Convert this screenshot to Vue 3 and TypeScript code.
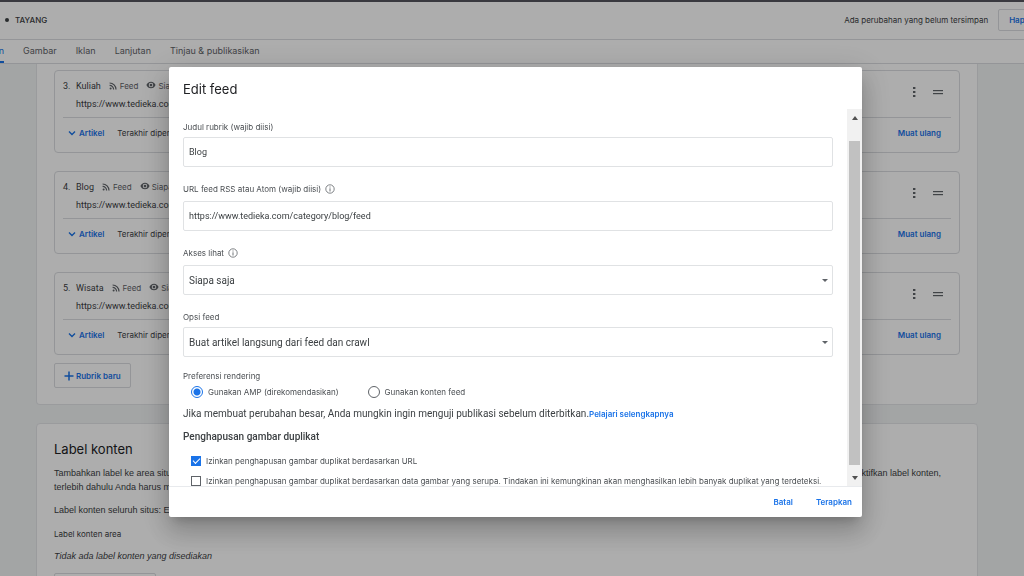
<script setup lang="ts">
import { ref } from 'vue'

interface Section {
  no: number
  title: string
  url: string
}

const tabs: string[] = ['Gambar', 'Iklan', 'Lanjutan', 'Tinjau & publikasikan']

const sections: Section[] = [
  { no: 3, title: 'Kuliah', url: 'https://www.tedieka.com/category/kuliah/feed' },
  { no: 4, title: 'Blog', url: 'https://www.tedieka.com/category/blog/feed' },
  { no: 5, title: 'Wisata', url: 'https://www.tedieka.com/category/wisata/feed' },
]

const title = ref('Blog')
const feedUrl = ref('https://www.tedieka.com/category/blog/feed')
const access = ref('Siapa saja')
const option = ref('Buat artikel langsung dari feed dan crawl')
const rendering = ref('amp')
const dedupeUrl = ref(true)
const dedupeData = ref(false)
</script>

<template>
  <div class="page">
    <header class="topbar">
      <span class="status"><i class="dot"></i>TAYANG</span>
      <span class="unsaved">Ada perubahan yang belum tersimpan</span>
      <button class="outlined discard" type="button">Hapus</button>
    </header>
    <nav class="tabs">
      <a class="tab current" href="#konten">Konten</a>
      <a v-for="t in tabs" :key="t" class="tab" href="#tab">{{ t }}</a>
    </nav>

    <main class="content">
      <section class="panel feeds">
        <article v-for="s in sections" :key="s.no" class="card">
          <div class="card-head">
            <span class="no">{{ s.no }}.</span>
            <div class="info">
              <div class="name-row">
                <span class="name">{{ s.title }}</span>
                <svg class="feed-icon" viewBox="0 0 8 8" width="8" height="8">
                  <circle cx="1.6" cy="6.4" r="1" fill="#5f6368" />
                  <path d="M.6 3.4A4 4 0 0 1 4.6 7.4M.6 1A6.4 6.4 0 0 1 7 7.4" fill="none" stroke="#5f6368" stroke-width="1.2" />
                </svg>
                <span class="meta">Feed</span>
                <svg class="eye-icon" viewBox="0 0 24 24" width="10" height="10">
                  <path fill="#5f6368" d="M12 4C7 4 2.700 7.400 1 12c1.700 4.600 6 8 11 8s9.300-3.400 11-8c-1.700-4.600-6-8-11-8zM12 17.500a5.500 5.500 0 1 1 0-11 5.500 5.500 0 0 1 0 11zm0-8.800a3.300 3.300 0 1 0 0 6.600 3.300 3.300 0 0 0 0-6.600z" />
                </svg>
                <span class="meta">Siapa saja</span>
              </div>
              <div class="url">{{ s.url }}</div>
            </div>
            <div class="tools">
              <button class="icon-btn" type="button" aria-label="Opsi lainnya">
                <svg viewBox="0 0 12 12" width="12" height="12" fill="#5f6368">
                  <rect x="5" y="1" width="2.400" height="2" />
                  <rect x="5" y="5" width="2.400" height="2" />
                  <rect x="5" y="9" width="2.400" height="2" />
                </svg>
              </button>
              <button class="icon-btn" type="button" aria-label="Pindahkan">
                <svg viewBox="0 0 12 12" width="12" height="12" fill="#5f6368">
                  <rect x="1" y="4" width="10" height="1.200" />
                  <rect x="1" y="7" width="10" height="1.200" />
                </svg>
              </button>
            </div>
          </div>
          <div class="card-foot">
            <button class="link-btn" type="button">
              <svg viewBox="0 0 8 8" width="8" height="8"><path d="M1 2.500 4 5.500 7 2.500" fill="none" stroke="#1a73e8" stroke-width="1.400" /></svg>
              Artikel
            </button>
            <span class="updated">Terakhir diperbarui</span>
            <button class="link-btn reload" type="button">Muat ulang</button>
          </div>
        </article>
        <button class="outlined add" type="button">
          <svg viewBox="0 0 10 10" width="10" height="10"><path d="M5 .5v9M.5 5h9" stroke="#1a73e8" stroke-width="1.500" /></svg>
          Rubrik baru
        </button>
      </section>

      <section class="panel labels">
        <h2>Label konten</h2>
        <p class="spread"><span>Tambahkan label ke area situs</span><span>mengaktifkan label konten,</span></p>
        <p>terlebih dahulu Anda harus memilih</p>
        <p class="site-label">Label konten seluruh situs: Edit</p>
        <p class="small">Label konten area</p>
        <p class="none">Tidak ada label konten yang disediakan</p>
        <button class="outlined add-label" type="button" aria-label="Tambahkan label"></button>
      </section>
    </main>

    <div class="scrim">
      <form class="dialog" role="dialog" aria-labelledby="dialog-title" @submit.prevent>
        <h1 id="dialog-title">Edit feed</h1>
        <div class="dialog-body">
          <div class="fields">
            <div class="field">
              <label for="f-title">Judul rubrik (wajib diisi)</label>
              <input id="f-title" v-model="title" class="box" type="text" />
            </div>
            <div class="field with-info">
              <label for="f-url">URL feed RSS atau Atom (wajib diisi)
                <svg viewBox="0 0 10 10" width="10" height="10"><circle cx="5" cy="5" r="4.200" fill="none" stroke="#5f6368" stroke-width=".8" /><path d="M5 4.300v3.200M5 2.500v1" stroke="#5f6368" stroke-width=".9" /></svg>
              </label>
              <input id="f-url" v-model="feedUrl" class="box" type="text" />
            </div>
            <div class="field with-info">
              <label for="f-access">Akses lihat
                <svg viewBox="0 0 10 10" width="10" height="10"><circle cx="5" cy="5" r="4.200" fill="none" stroke="#5f6368" stroke-width=".8" /><path d="M5 4.300v3.200M5 2.500v1" stroke="#5f6368" stroke-width=".9" /></svg>
              </label>
              <div class="select-wrap">
                <select id="f-access" v-model="access" class="box"><option>Siapa saja</option></select>
                <i class="caret"></i>
              </div>
            </div>
            <div class="field">
              <label for="f-option">Opsi feed</label>
              <div class="select-wrap">
                <select id="f-option" v-model="option" class="box"><option>Buat artikel langsung dari feed dan crawl</option></select>
                <i class="caret"></i>
              </div>
            </div>
            <fieldset class="render">
              <legend>Preferensi rendering</legend>
              <div class="choices">
                <label><input v-model="rendering" type="radio" name="render" value="amp" />Gunakan AMP (direkomendasikan)</label>
                <label><input v-model="rendering" type="radio" name="render" value="feed" />Gunakan konten feed</label>
              </div>
            </fieldset>
            <p class="hint">Jika membuat perubahan besar, Anda mungkin ingin menguji publikasi sebelum diterbitkan.<a href="#bantuan">Pelajari selengkapnya</a></p>
            <h2 class="sub">Penghapusan gambar duplikat</h2>
            <label class="check"><input v-model="dedupeUrl" type="checkbox" />Izinkan penghapusan gambar duplikat berdasarkan URL</label>
            <label class="check"><input v-model="dedupeData" type="checkbox" />Izinkan penghapusan gambar duplikat berdasarkan data gambar yang serupa. Tindakan ini kemungkinan akan menghasilkan lebih banyak duplikat yang terdeteksi.</label>
          </div>
          <div class="scrollbar">
            <i class="arrow up"></i>
            <div class="track"><div class="thumb"></div></div>
            <i class="arrow down"></i>
          </div>
        </div>
        <footer class="actions">
          <button class="link-btn" type="button">Batal</button>
          <button class="link-btn" type="submit">Terapkan</button>
        </footer>
      </form>
    </div>
  </div>
</template>

<style>
body {
  background: #f1f3f4;
}
</style>

<style scoped>
* {
  box-sizing: border-box;
}
.page {
  height: 100vh;
  overflow: hidden;
  background: #f1f3f4;
  color: #3c4043;
  font-family: Roboto, "Liberation Sans", sans-serif;
  font-size: 10px;
  line-height: 14px;
}
h1, h2, p, fieldset {
  margin: 0;
  padding: 0;
  border: 0;
}
button, input, select {
  font-family: inherit;
  color: inherit;
  margin: 0;
}
a {
  text-decoration: none;
}
svg {
  display: block;
  flex: none;
}
.topbar {
  display: flex;
  align-items: center;
  height: 40px;
  padding: 0 0 2px 5px;
  background: #fff;
  border-top: 2px solid #55555d;
  border-bottom: 1px solid #dadce0;
  overflow: hidden;
}
.status {
  display: flex;
  align-items: center;
  gap: 6px;
  font-family: Inter, sans-serif;
  font-size: 8px;
  font-weight: 500;
}
.dot {
  width: 4px;
  height: 4px;
  border-radius: 50%;
  background: #3c4043;
}
.unsaved {
  margin-left: auto;
  margin-right: 10px;
  font-family: Inter, sans-serif;
  font-size: 8px;
}
.outlined {
  display: flex;
  align-items: center;
  background: #fff;
  border: 1px solid #dadce0;
  border-radius: 2px;
  color: #1a73e8;
  font-family: Inter, sans-serif;
  font-size: 8px;
  font-weight: 600;
  line-height: 12px;
}
.discard {
  height: 22px;
  padding: 0 10px;
  margin-right: -21px;
}
.tabs {
  display: flex;
  gap: 19px;
  height: 24px;
  background: #fff;
  border-bottom: 1px solid #dadce0;
  margin-left: -31px;
}
.tab {
  height: 23px;
  line-height: 22px;
  font-family: Inter, sans-serif;
  font-size: 9px;
  color: #5f6368;
}
.tab.current {
  width: 35px;
  display: flex;
  justify-content: flex-end;
  color: #1a73e8;
  border-bottom: 2px solid #1a73e8;
}
.content {
  padding: 0 46px 0 36px;
}
.panel {
  background: #fff;
  border: 1px solid #e3e5e8;
  border-radius: 4px;
  padding: 0 17px;
}
.feeds {
  border-top: 0;
  border-radius: 0 0 4px 4px;
  padding-top: 6px;
  padding-bottom: 16px;
}
.card {
  border: 1px solid #dadce0;
  border-radius: 4px;
  padding: 6px 8px 5px;
  margin-bottom: 18px;
}
.card-head {
  display: flex;
  height: 41px;
  border-bottom: 1px solid #dadce0;
}
.no {
  width: 13px;
  font-size: 9px;
  line-height: 18px;
}
.info {
  flex: 1;
}
.name-row {
  display: flex;
  align-items: center;
  height: 18px;
}
.name {
  font-size: 9px;
}
.feed-icon {
  margin: 0 3px 0 8px;
}
.eye-icon {
  margin: 0 2px 2px 8px;
}
.meta {
  font-family: Inter, sans-serif;
  font-size: 8px;
  color: #5f6368;
}
.url {
  font-size: 9px;
  line-height: 18px;
}
.tools {
  display: flex;
  gap: 12px;
  height: 30px;
  align-items: center;
  padding-right: 7px;
}
.icon-btn {
  border: 0;
  padding: 0;
  background: none;
}
.card-foot {
  display: flex;
  align-items: center;
  height: 29px;
  padding: 0 10px 0 5px;
}
.link-btn {
  display: flex;
  align-items: center;
  gap: 3px;
  border: 0;
  padding: 0;
  background: none;
  color: #1a73e8;
  font-family: Inter, sans-serif;
  font-size: 8px;
  font-weight: 600;
  line-height: 12px;
}
.updated {
  margin-left: 13px;
  font-family: Inter, sans-serif;
  font-size: 8px;
}
.reload {
  margin-left: auto;
}
.add {
  height: 25px;
  gap: 2px;
  padding: 0 9px;
  margin-top: -10px;
}
.labels {
  margin-top: 18px;
  padding-top: 16px;
  height: 200px;
}
.labels h2 {
  font-family: Inter, sans-serif;
  font-size: 13px;
  font-weight: 400;
  line-height: 18px;
  color: #202124;
  margin-bottom: 8px;
}
.labels p {
  font-family: "Liberation Sans", sans-serif;
  font-size: 9px;
}
.spread {
  display: flex;
  justify-content: space-between;
  padding-right: 19px;
}
.site-label {
  margin-top: 9px;
}
.labels .small {
  margin-top: 10px;
  font-family: Inter, sans-serif;
  font-size: 8px;
}
.none {
  margin-top: 8px;
  font-style: italic;
}
.add-label {
  margin-top: 10px;
  height: 25px;
  width: 102px;
}
.scrim {
  position: fixed;
  inset: 0;
  display: flex;
  padding: 67px 162px 59px 169px;
  background: rgba(0, 0, 0, 0.32);
}
.dialog {
  flex: 1;
  min-width: 0;
  display: flex;
  flex-direction: column;
  background: #fff;
  border-radius: 2px;
  overflow: hidden;
  box-shadow: 0 7px 10px -5px rgba(0, 0, 0, 0.2), 0 16px 25px 2px rgba(0, 0, 0, 0.14), 0 6px 31px 5px rgba(0, 0, 0, 0.12);
}
.dialog h1 {
  height: 42px;
  padding: 12px 14px;
  font-family: Inter, sans-serif;
  font-size: 13px;
  font-weight: 400;
  line-height: 20px;
  color: #202124;
}
.dialog-body {
  flex: 1;
  min-height: 0;
  display: flex;
}
.fields {
  flex: 1;
  min-width: 0;
  overflow: hidden;
  padding: 12px 14px 0;
}
.field {
  display: flex;
  flex-direction: column;
  gap: 4px;
  margin-bottom: 16px;
}
.field label, .render legend {
  display: flex;
  align-items: center;
  gap: 4px;
  height: 12px;
  padding: 0;
  font-family: Inter, sans-serif;
  font-size: 8px;
  line-height: 12px;
  color: #4a4e52;
}
.field.with-info {
  gap: 6px;
}
.box {
  display: block;
  width: 100%;
  height: 30px;
  padding: 0 5px;
  border: 1px solid #e0e2e4;
  border-radius: 2px;
  background: #fff;
  font-size: 10px;
  appearance: none;
  outline: 0;
}
input.box {
  font-size: 9px;
}
.select-wrap {
  position: relative;
}
.caret {
  position: absolute;
  right: 5px;
  top: 14px;
  border: 3px solid transparent;
  border-top-color: #5f6368;
  border-bottom: 0;
}
.render {
  margin-top: -3px;
}
.choices {
  display: flex;
  gap: 29px;
  padding: 3px 0 0 8px;
}
.choices label, .check {
  display: flex;
  align-items: center;
  gap: 5px;
  height: 14px;
  font-family: Inter, sans-serif;
  font-size: 8px;
  color: #4a4e52;
  white-space: nowrap;
}
.choices input {
  appearance: none;
  width: 12px;
  height: 12px;
  border: 1px solid #5f6368;
  border-radius: 50%;
}
.choices input:checked {
  border-color: #1a73e8;
  background: radial-gradient(circle, #1a73e8 3px, #fff 4px);
}
.hint {
  margin-top: 8px;
  white-space: nowrap;
}
.hint a {
  color: #1a73e8;
  font-family: Inter, sans-serif;
  font-size: 8px;
  font-weight: 600;
}
.sub {
  margin-top: 9px;
  font-size: 10px;
  font-weight: 500;
  line-height: 14px;
}
.check {
  margin-top: 10px;
  padding-left: 8px;
}
.check + .check {
  margin-top: 6px;
}
.check input {
  flex: none;
  appearance: none;
  display: grid;
  place-items: center;
  width: 10px;
  height: 10px;
  border: 1px solid #5f6368;
}
.check input:checked {
  border-color: #1a73e8;
  background: #1a73e8;
}
.check input:checked::after {
  content: "";
  width: 6px;
  height: 3px;
  border: solid #fff;
  border-width: 0 0 1px 1px;
  transform: translateY(-1px) rotate(-45deg);
}
.scrollbar {
  width: 15px;
  display: flex;
  flex-direction: column;
  align-items: center;
  background: #f1f1f1;
}
.track {
  flex: 1;
  width: 11px;
  margin: 21px 0 11px;
}
.thumb {
  height: 100%;
  background: #c1c1c1;
}
.arrow {
  border: 3px solid transparent;
}
.arrow.up {
  margin-top: 7px;
  border-top: 0;
  border-bottom: 4px solid #505050;
}
.arrow.down {
  margin-bottom: 6px;
  border-bottom: 0;
  border-top: 4px solid #505050;
}
.actions {
  display: flex;
  justify-content: flex-end;
  gap: 23px;
  height: 31px;
  padding: 0 10px;
  border-top: 1px solid #e8eaed;
}
</style>
